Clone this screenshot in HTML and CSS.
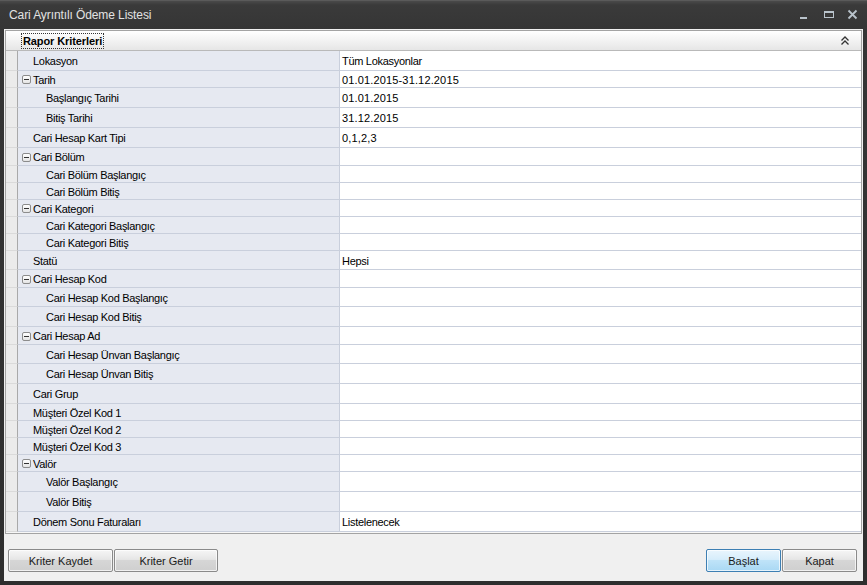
FILE: index.html
```html
<!DOCTYPE html>
<html>
<head>
<meta charset="utf-8">
<link rel="stylesheet" href="styles.css">
</head>
<body>
<div class="window">
  <div class="titlebar">
    <span class="title">Cari Ayrıntılı Ödeme Listesi</span>
    <div class="winbtns">
      <svg class="wb" width="12" height="12" viewBox="0 0 12 12"><rect x="1" y="8" width="7" height="2" fill="#b9c3cb"/></svg>
      <svg class="wb" width="12" height="12" viewBox="0 0 12 12"><rect x="1.5" y="2.5" width="9" height="6" fill="none" stroke="#b9c3cb"/><rect x="1" y="2" width="10" height="2" fill="#b9c3cb"/></svg>
      <svg class="wb" width="12" height="12" viewBox="0 0 12 12"><path d="M1.5 1.5 L9.5 9.5 M9.5 1.5 L1.5 9.5" stroke="#b9c3cb" stroke-width="1.8"/></svg>
    </div>
  </div>
  <div class="client">
    <div class="panel">
      <div class="phead">
        <span class="ptitle">Rapor Kriterleri</span>
        <svg class="chev" width="10" height="10" viewBox="0 0 10 10"><path d="M1.5 4.5 L5 1 L8.5 4.5 M1.5 8.5 L5 5 L8.5 8.5" fill="none" stroke="#333" stroke-width="1.3"/></svg>
      </div>
      <div class="grid">
        <div class="row h20"><div class="gut"></div><div class="lab">Lokasyon</div><div class="val">Tüm Lokasyonlar</div></div>
        <div class="row h17"><div class="gut"></div><div class="lab cat"><span class="tog"></span>Tarih</div><div class="val num">01.01.2015-31.12.2015</div></div>
        <div class="row h20"><div class="gut"></div><div class="lab sub">Başlangıç Tarihi</div><div class="val num">01.01.2015</div></div>
        <div class="row h20"><div class="gut"></div><div class="lab sub">Bitiş Tarihi</div><div class="val num">31.12.2015</div></div>
        <div class="row h20"><div class="gut"></div><div class="lab">Cari Hesap Kart Tipi</div><div class="val num">0,1,2,3</div></div>
        <div class="row h18"><div class="gut"></div><div class="lab cat"><span class="tog"></span>Cari Bölüm</div><div class="val"></div></div>
        <div class="row h17"><div class="gut"></div><div class="lab sub">Cari Bölüm Başlangıç</div><div class="val"></div></div>
        <div class="row h17"><div class="gut"></div><div class="lab sub">Cari Bölüm Bitiş</div><div class="val"></div></div>
        <div class="row h17"><div class="gut"></div><div class="lab cat"><span class="tog"></span>Cari Kategori</div><div class="val"></div></div>
        <div class="row h17"><div class="gut"></div><div class="lab sub">Cari Kategori Başlangıç</div><div class="val"></div></div>
        <div class="row h17"><div class="gut"></div><div class="lab sub">Cari Kategori Bitiş</div><div class="val"></div></div>
        <div class="row h19"><div class="gut"></div><div class="lab">Statü</div><div class="val">Hepsi</div></div>
        <div class="row h18"><div class="gut"></div><div class="lab cat"><span class="tog"></span>Cari Hesap Kod</div><div class="val"></div></div>
        <div class="row h19"><div class="gut"></div><div class="lab sub">Cari Hesap Kod Başlangıç</div><div class="val"></div></div>
        <div class="row h20"><div class="gut"></div><div class="lab sub">Cari Hesap Kod Bitiş</div><div class="val"></div></div>
        <div class="row h18"><div class="gut"></div><div class="lab cat"><span class="tog"></span>Cari Hesap Ad</div><div class="val"></div></div>
        <div class="row h19"><div class="gut"></div><div class="lab sub">Cari Hesap Ünvan Başlangıç</div><div class="val"></div></div>
        <div class="row h20"><div class="gut"></div><div class="lab sub">Cari Hesap Ünvan Bitiş</div><div class="val"></div></div>
        <div class="row h20"><div class="gut"></div><div class="lab">Cari Grup</div><div class="val"></div></div>
        <div class="row h17"><div class="gut"></div><div class="lab">Müşteri Özel Kod 1</div><div class="val"></div></div>
        <div class="row h17"><div class="gut"></div><div class="lab">Müşteri Özel Kod 2</div><div class="val"></div></div>
        <div class="row h17"><div class="gut"></div><div class="lab">Müşteri Özel Kod 3</div><div class="val"></div></div>
        <div class="row h17"><div class="gut"></div><div class="lab cat"><span class="tog"></span>Valör</div><div class="val"></div></div>
        <div class="row h20"><div class="gut"></div><div class="lab sub">Valör Başlangıç</div><div class="val"></div></div>
        <div class="row h20"><div class="gut"></div><div class="lab sub">Valör Bitiş</div><div class="val"></div></div>
        <div class="row h20"><div class="gut"></div><div class="lab">Dönem Sonu Faturaları</div><div class="val">Listelenecek</div></div>
      </div>
    </div>
    <div class="footer">
      <div class="btngroup">
        <button class="btn w105">Kriter Kaydet</button>
        <button class="btn w104">Kriter Getir</button>
      </div>
      <div class="btngroup">
        <button class="btn primary w75">Başlat</button>
        <button class="btn w75">Kapat</button>
      </div>
    </div>
  </div>
</div>
</body>
</html>
```

FILE: styles.css
```css
* { box-sizing: border-box; }
html, body { margin: 0; padding: 0; }
body {
  width: 867px;
  height: 585px;
  overflow: hidden;
  background: #2a2a2a;
  font-family: "Liberation Sans", Arial, sans-serif;
  font-size: 11px;
  color: #000;
}
.window {
  width: 867px;
  height: 585px;
  display: flex;
  flex-direction: column;
  background: linear-gradient(#4a4a4a 0, #3a3a3a 4px, #353535 30px, #2e2e2e 100%);
  border-top: 1px solid #5a5a5a;
}
.titlebar {
  height: 28px;
  display: flex;
  align-items: center;
  justify-content: space-between;
  padding: 0 0 0 9px;
  flex: none;
}
.title {
  color: #e2e2e2;
  font-size: 12px;
  letter-spacing: -0.1px;
}
.winbtns {
  display: flex;
  gap: 12px;
  padding-right: 8px;
  margin-top: -1px;
}
.client {
  flex: 1;
  margin: 0 4px 4px 4px;
  background: #f0f0f0;
  display: flex;
  flex-direction: column;
  padding: 1px 1px 0 1px;
}
.panel {
  border: 1px solid #a3a3a3;
  background: #f7f7f7;
  height: 504px;
  flex: none;
}
.phead {
  height: 20px;
  display: flex;
  align-items: center;
  justify-content: space-between;
  padding: 0 11px 0 16px;
  background: linear-gradient(#ffffff, #f0f0f0 60%, #e6e6e6);
  border-bottom: 1px solid #b9b9b9;
}
.ptitle {
  font-weight: bold;
  outline: 1px dotted #333;
  padding: 0 1px;
  line-height: 14px;
  letter-spacing: -0.1px;
}
.chev { display: block; }
.grid { display: flex; flex-direction: column; }
.row {
  display: flex;
  border-bottom: 1px solid #c9cfdc;
}
.h17 { height: 17px; }
.h18 { height: 18px; }
.h19 { height: 19px; }
.h20 { height: 20px; }
.gut {
  width: 12px;
  background: #ebebeb;
  border-right: 1px solid #a9a9a9;
  margin-bottom: -1px;
  border-bottom: 1px solid #dadada;
}
.lab {
  width: 322px;
  background: #e6e9f1;
  display: flex;
  align-items: center;
  padding-left: 15px;
  padding-top: 1px;
  border-right: 1px solid #c9cfdc;
  white-space: nowrap;
  letter-spacing: -0.3px;
}
.lab.cat { padding-left: 4px; }
.lab.sub { padding-left: 28px; }
.tog {
  width: 9px;
  height: 9px;
  border: 1px solid #8c8c8c;
  border-radius: 2px;
  background: linear-gradient(#ffffff, #e4e4e4);
  position: relative;
  margin-right: 2px;
}
.tog::after {
  content: "";
  position: absolute;
  left: 1px;
  top: 3px;
  width: 5px;
  height: 1px;
  background: #333;
}
.val {
  flex: 1;
  background: #fff;
  display: flex;
  align-items: center;
  padding-left: 2px;
  padding-top: 1px;
  letter-spacing: -0.3px;
}
.val.num { letter-spacing: 0.15px; }
.footer {
  flex: 1;
  display: flex;
  justify-content: space-between;
  align-items: flex-start;
  padding: 15px 5px 0 3px;
}
.btngroup { display: flex; gap: 1px; }
.btn {
  height: 23px;
  font-family: "Liberation Sans", Arial, sans-serif;
  font-size: 11px;
  color: #1a1a1a;
  border: 1px solid #8a8a8a;
  border-radius: 2px;
  background: linear-gradient(#f6f6f6, #e6e6e6 45%, #d6d6d6 50%, #cfcfcf);
  box-shadow: inset 0 0 0 1px rgba(255,255,255,0.7);
  padding: 0;
}
.btn.primary {
  border-color: #3d7fb3;
  background: linear-gradient(#e9f5fd, #d6edfb 45%, #bfe3f8 50%, #a9d8f4);
}
.w105 { width: 105px; }
.w104 { width: 104px; }
.w75 { width: 75px; }
```
